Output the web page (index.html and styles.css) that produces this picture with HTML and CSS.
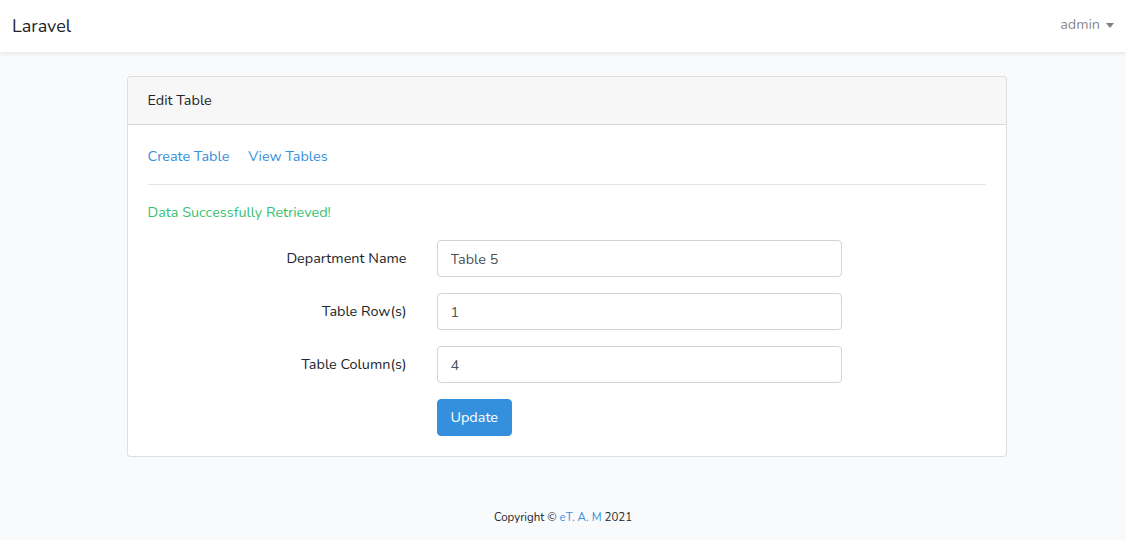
FILE: index.html
```html
<!DOCTYPE html>
<html lang="en">
<head>
<meta charset="utf-8">
<title>Laravel</title>
<link rel="stylesheet" href="styles.css">
</head>
<body>
<nav class="navbar">
  <a class="brand" href="#">Laravel</a>
  <a class="user" href="#">admin <span class="caret"></span></a>
</nav>
<main class="main">
  <div class="card">
    <div class="card-header">Edit Table</div>
    <div class="card-body">
      <div class="links">
        <a href="#">Create Table</a>
        <a href="#">View Tables</a>
      </div>
      <hr class="sep">
      <p class="success">Data Successfully Retrieved!</p>
      <form class="form">
        <div class="row">
          <label class="label">Department Name</label>
          <input class="input" type="text" value="Table 5">
        </div>
        <div class="row">
          <label class="label">Table Row(s)</label>
          <input class="input" type="text" value="1">
        </div>
        <div class="row">
          <label class="label">Table Column(s)</label>
          <input class="input" type="text" value="4">
        </div>
        <div class="row row-btn">
          <span class="label"></span>
          <button class="btn" type="button">Update</button>
        </div>
      </form>
    </div>
  </div>
</main>
<footer class="footer">Copyright © <a href="#">eT. A. M</a> 2021</footer>
</body>
</html>
```
FILE: styles.css
```css
* { box-sizing: border-box; }
html, body { margin: 0; padding: 0; }
body {
  background: #f8fafc;
  font-family: "Nunito", "Lato", "Noto Sans", sans-serif;
  font-size: 14.4px;
  line-height: 1.6;
  color: #212529;
  width: 1126px;
  height: 540px;
  overflow: hidden;
}
a { color: #3490dc; text-decoration: none; }
.navbar {
  height: 52px;
  background: #fff;
  box-shadow: 0 2px 4px rgba(0,0,0,.075);
  display: flex;
  align-items: center;
  justify-content: space-between;
  padding: 0 12px;
}
.brand { color: #212529; font-size: 18px; }
.user { color: rgba(0,0,0,.5); display: flex; align-items: center; gap: 6px; padding-bottom: 2px; }
.caret {
  width: 0; height: 0;
  border-left: 4.5px solid transparent;
  border-right: 4.5px solid transparent;
  border-top: 5px solid rgba(0,0,0,.5);
  margin-top: 1px;
}
.main { padding: 24px 0 0 7px; }
.card {
  width: 880px;
  margin: 0 auto;
  background: #fff;
  border: 1px solid rgba(0,0,0,.125);
  border-radius: 4px;
}
.card-header {
  height: 48px;
  padding: 0 20px;
  display: flex;
  align-items: center;
  background: #f7f7f7;
  border-bottom: 1px solid rgba(0,0,0,.125);
  border-radius: 4px 4px 0 0;
}
.card-body { padding: 20px 20px 20px; }
.links { display: flex; gap: 19px; height: 23px; margin-top: 0; }
.sep { border: 0; border-top: 1px solid rgba(0,0,0,.1); margin: 16px 0 16px; }
.success { color: #38c172; margin: 0 0 16px; }
.form { display: flex; flex-direction: column; gap: 16px; }
.row { display: grid; grid-template-columns: 259px 405px; column-gap: 30px; align-items: center; }
.label { text-align: right; }
.input {
  height: 37px;
  border: 1px solid #ced4da;
  border-radius: 4px;
  padding: 6px 13px;
  font: inherit;
  color: #495057;
  background: #fff;
}
.btn {
  justify-self: start;
  height: 37px;
  padding: 0 13px;
  background: #3490dc;
  border: 1px solid #3490dc;
  color: #fff;
  border-radius: 4px;
  font: inherit;
}
.footer { text-align: center; font-size: 11.5px; margin-top: 51px; color: #212529; }
```
